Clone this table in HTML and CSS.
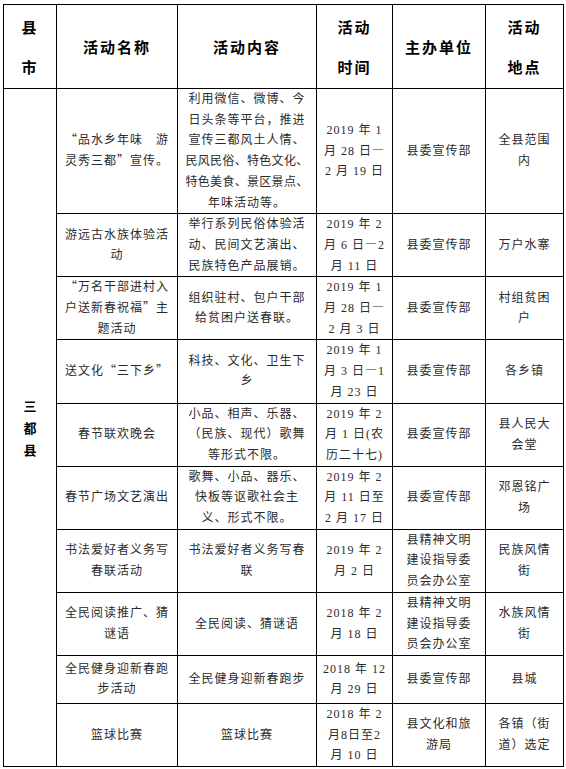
FILE: index.html
```
<!DOCTYPE html>
<html lang="zh-CN">
<head>
<meta charset="utf-8">
<title>三都县春节活动</title>
<link rel="stylesheet" href="styles.css">
</head>
<body>
<table class="sheet">
  <colgroup>
    <col class="c0"><col class="c1"><col class="c2"><col class="c3"><col class="c4"><col class="c5">
  </colgroup>
  <thead>
    <tr class="head">
      <th>县<br>市</th>
      <th>活动名称</th>
      <th>活动内容</th>
      <th>活动<br>时间</th>
      <th>主办单位</th>
      <th>活动<br>地点</th>
    </tr>
  </thead>
  <tbody>
    <tr class="r-tall">
      <td class="county" rowspan="10">三<br>都<br>县</td>
      <td><span class="fw">“</span>品水乡年味　游<br>灵秀三都<span class="fw">”</span>宣传。</td>
      <td>利用微信、微博、今<br>日头条等平台，推进<br>宣传三都风土人情、<br><span class="tight">民风民俗、特色文化、</span><br><span class="tight">特色美食、景区景点、</span><br>年味活动等。</td>
      <td class="date">2019 年 1<br>月 28 日<span class="fw">—</span><br>2 月 19 日</td>
      <td>县委宣传部</td>
      <td>全县范围<br>内</td>
    </tr>
    <tr class="r">
      <td>游远古水族体验活<br>动</td>
      <td>举行系列民俗体验活<br>动、民间文艺演出、<br>民族特色产品展销。</td>
      <td class="date">2019 年 2<br>月 6 日<span class="fw">—</span>2<br>月 11 日</td>
      <td>县委宣传部</td>
      <td>万户水寨</td>
    </tr>
    <tr class="r">
      <td><span class="fw">“</span>万名干部进村入<br>户送新春祝福<span class="fw">”</span>主<br>题活动</td>
      <td>组织驻村、包户干部<br>给贫困户送春联。</td>
      <td class="date">2019 年 1<br>月 28 日<span class="fw">—</span><br>2 月 3 日</td>
      <td>县委宣传部</td>
      <td>村组贫困<br>户</td>
    </tr>
    <tr class="r">
      <td>送文化<span class="fw">“</span>三下乡<span class="fw">”</span></td>
      <td>科技、文化、卫生下<br>乡</td>
      <td class="date">2019 年 1<br>月 3 日<span class="fw">—</span>1<br>月 23 日</td>
      <td>县委宣传部</td>
      <td>各乡镇</td>
    </tr>
    <tr class="r">
      <td>春节联欢晚会</td>
      <td>小品、相声、乐器、<br>（民族、现代）歌舞<br>等形式不限。</td>
      <td class="date">2019 年 2<br>月 1 日(农<br>历二十七)</td>
      <td>县委宣传部</td>
      <td>县人民大<br>会堂</td>
    </tr>
    <tr class="r">
      <td>春节广场文艺演出</td>
      <td>歌舞、小品、器乐、<br>快板等讴歌社会主<br>义、形式不限。</td>
      <td class="date">2019 年 2<br>月 11 日至<br>2 月 17 日</td>
      <td>县委宣传部</td>
      <td>邓恩铭广<br>场</td>
    </tr>
    <tr class="r">
      <td>书法爱好者义务写<br>春联活动</td>
      <td>书法爱好者义务写春<br>联</td>
      <td class="date">2019 年 2<br>月 2 日</td>
      <td>县精神文明<br>建设指导委<br>员会办公室</td>
      <td>民族风情<br>街</td>
    </tr>
    <tr class="r">
      <td>全民阅读推广、猜<br>谜语</td>
      <td>全民阅读、猜谜语</td>
      <td class="date">2018 年 2<br>月 18 日</td>
      <td>县精神文明<br>建设指导委<br>员会办公室</td>
      <td>水族风情<br>街</td>
    </tr>
    <tr class="r-short">
      <td>全民健身迎新春跑<br>步活动</td>
      <td>全民健身迎新春跑步</td>
      <td class="date">2018 年 12<br>月 29 日</td>
      <td>县委宣传部</td>
      <td>县城</td>
    </tr>
    <tr class="r">
      <td>篮球比赛</td>
      <td>篮球比赛</td>
      <td class="date">2018 年 2<br>月8日至2<br>月 10 日</td>
      <td>县文化和旅<br>游局</td>
      <td>各镇（街<br>道）选定</td>
    </tr>
  </tbody>
</table>
</body>
</html>
```
FILE: styles.css
```
html, body {
  margin: 0;
  padding: 0;
  background: #ffffff;
}

body {
  padding: 4px 0 0 3px;
}

.sheet {
  border-collapse: collapse;
  table-layout: fixed;
  width: 560px;
  font-family: "Liberation Serif", "Noto Sans CJK SC", serif;
  color: #2b2b2b;
}

.c0 { width: 53px; }
.c1 { width: 121px; }
.c2 { width: 139px; }
.c3 { width: 76px; }
.c4 { width: 93px; }
.c5 { width: 78px; }

.sheet th,
.sheet td {
  border: 1px solid #000;
  padding: 0 2px;
  text-align: center;
  vertical-align: middle;
  white-space: nowrap;
  overflow: hidden;
}

.head {
  height: 84px;
}

.head th {
  font-family: "Noto Sans CJK SC", sans-serif;
  font-weight: 700;
  font-size: 15px;
  line-height: 40px;
  letter-spacing: 2px;
  color: #000;
}

.sheet td {
  font-size: 12px;
  line-height: 20.7px;
  letter-spacing: 1px;
}

.r-tall { height: 125px; }
.r { height: 63px; }
.r-short { height: 48px; }

.tight {
  letter-spacing: 0.3px;
}

.fw {
  font-family: "Noto Sans CJK SC", sans-serif;
  font-feature-settings: "fwid" 1;
  line-height: 1;
}

.date {
  letter-spacing: 0.6px;
}

.sheet td.county {
  font-family: "Noto Sans CJK SC", sans-serif;
  font-weight: 700;
  font-size: 13px;
  line-height: 22px;
  letter-spacing: 0;
  color: #000;
}
```
